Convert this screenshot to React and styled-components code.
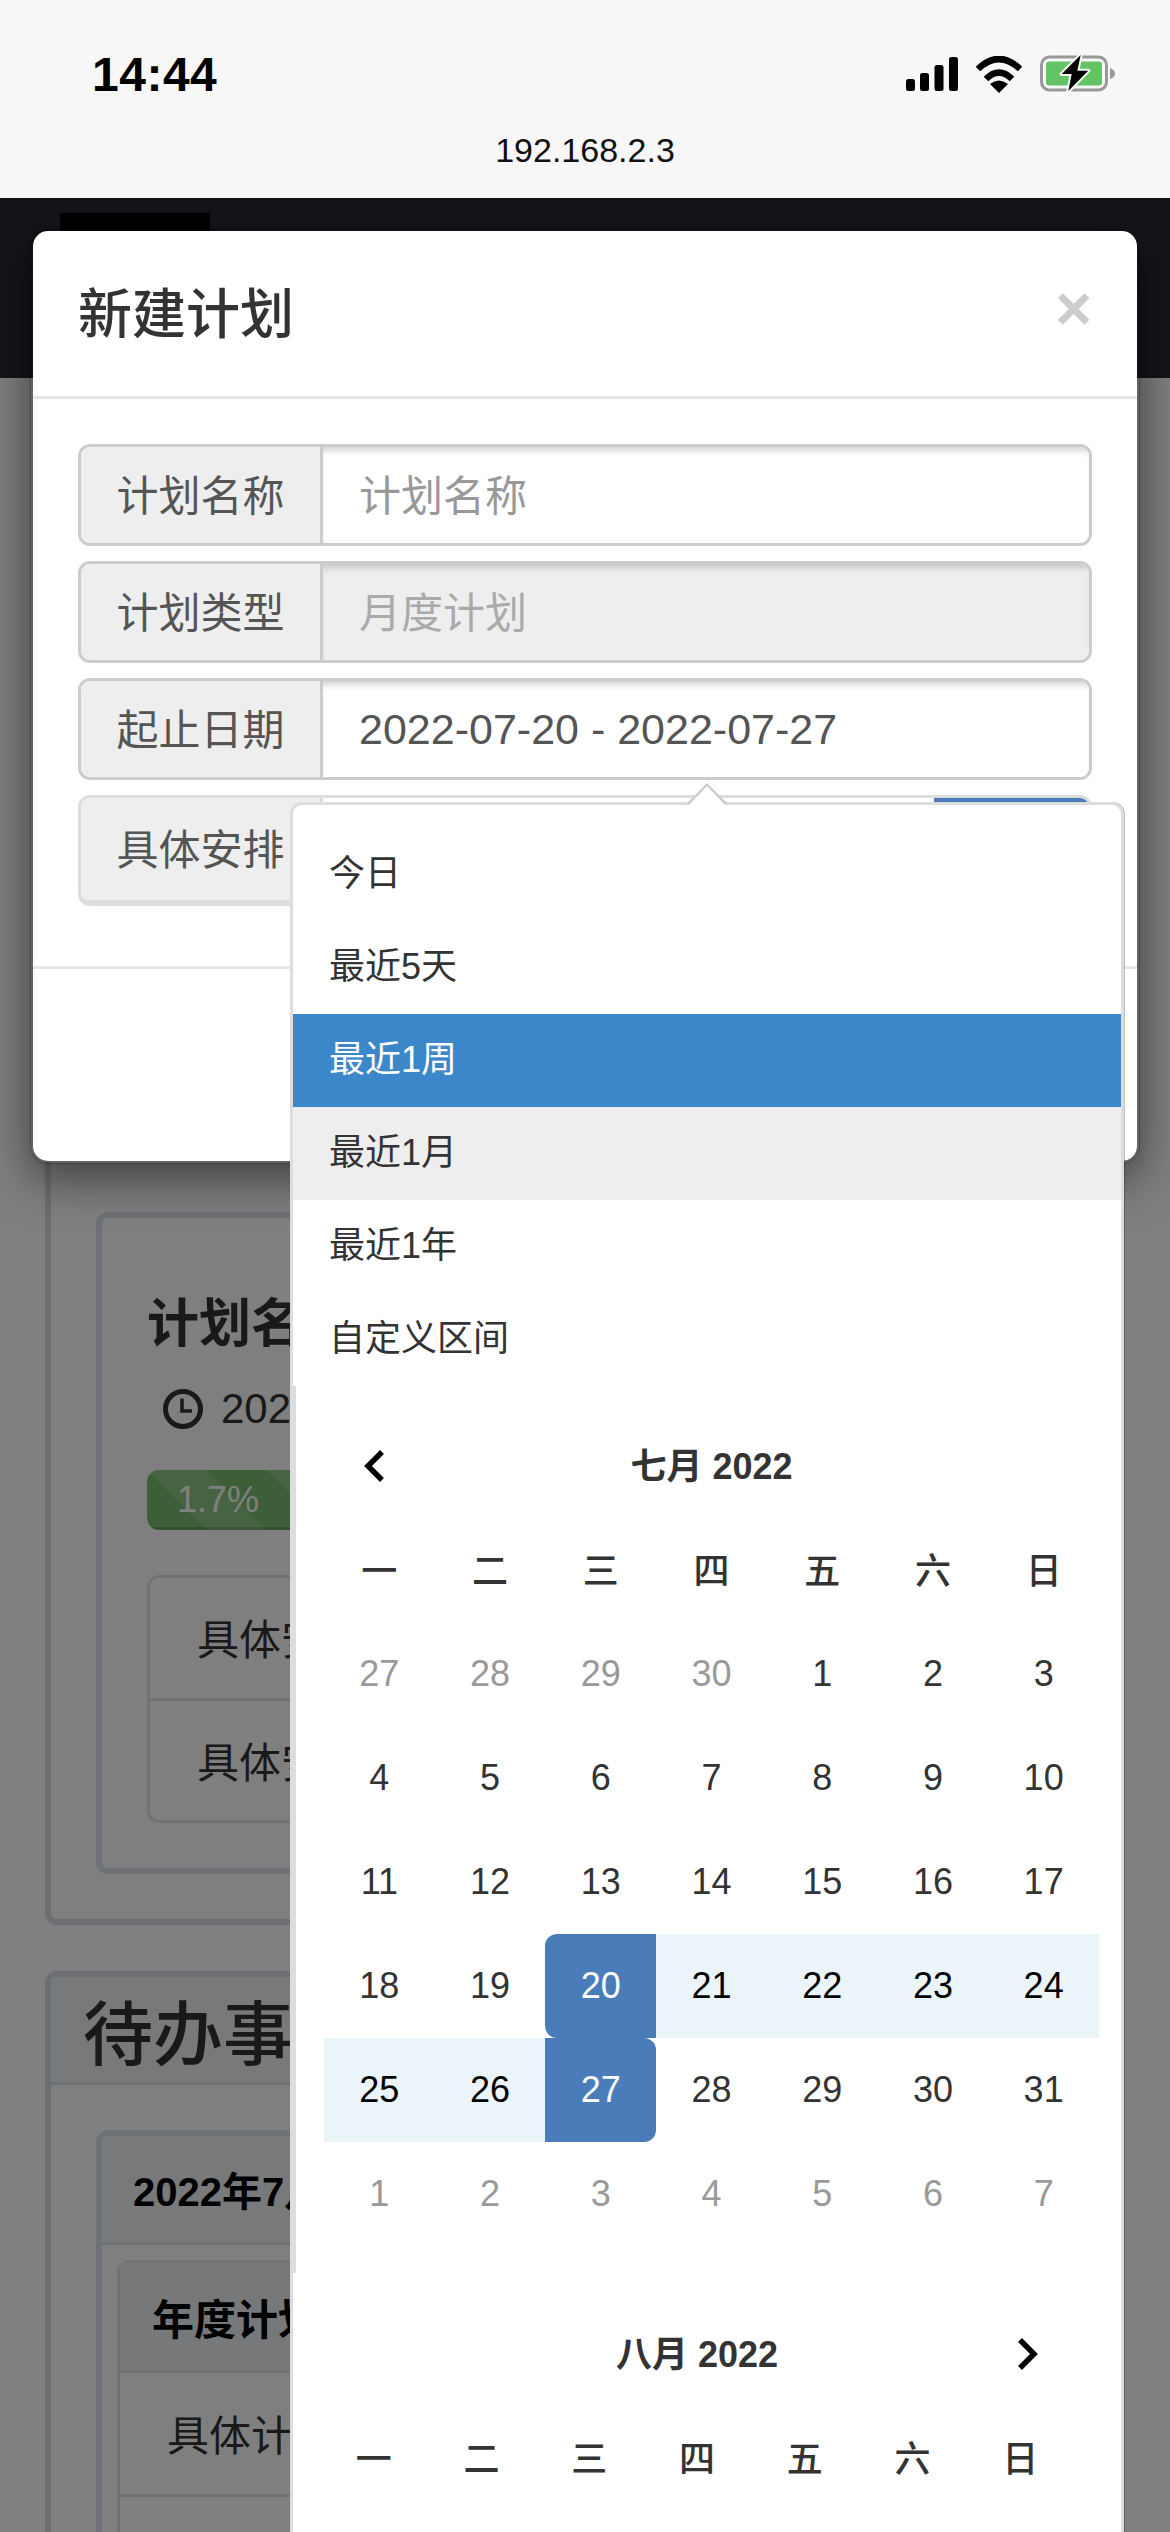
import React from "react";
import styled, { createGlobalStyle } from "styled-components";

const GlobalStyle = createGlobalStyle`
  html, body {
    margin: 0;
    padding: 0;
    width: 1170px;
    height: 2532px;
    overflow: hidden;
    background: #fff;
  }
  * {
    box-sizing: border-box;
  }
  body {
    font-family: "Liberation Sans", "Noto Sans CJK SC", sans-serif;
    color: #333;
  }
`;

const BrowserBar = styled.div`
  height: 198px;
  background: #f7f7f7;
  color: #000;
`;

const StatusRow = styled.div`
  height: 124px;
  padding: 24px 55px 0 92px;
  display: flex;
  align-items: center;
  justify-content: space-between;
`;

const Time = styled.div`
  font-size: 48px;
  font-weight: 700;
  letter-spacing: 0.5px;
`;

const StatusIcons = styled.div`
  display: flex;
  align-items: center;
  gap: 17px;
`;

const Url = styled.div`
  height: 52px;
  font-size: 34px;
  line-height: 52px;
  text-align: center;
  color: #111;
`;

const Viewport = styled.div`
  position: relative;
  height: 2334px;
  overflow: hidden;
`;

const Navbar = styled.div`
  height: 180px;
  padding: 15px 0 0 60px;
  background: #262a34;
`;

const Redaction = styled.div`
  width: 150px;
  height: 60px;
  background: #000;
`;

const Content = styled.div`
  padding: 30px 54px 0 45px;
  display: flex;
  flex-direction: column;
  gap: 46px;
`;

const Panel = styled.section`
  border: 6px solid #d6dee6;
  border-radius: 12px;
  background: #fff;
`;

const PanelHeading = styled.h2`
  margin: 0;
  height: 108px;
  padding-left: 32px;
  display: flex;
  align-items: center;
  background: #eef2f6;
  border-bottom: 3px solid #dde2e7;
  font-size: 70px;
  font-weight: 500;
`;

const PanelBody = styled.div`
  padding: ${(p) => p.$top}px 45px 45px;
`;

const Card = styled.div`
  border: 6px solid #dce3ea;
  border-radius: 12px;
  background: #fff;
`;

const CardBody = styled.div`
  padding: 45px;
`;

const PlanName = styled.h3`
  margin: 0;
  height: 118px;
  padding-bottom: 6px;
  display: flex;
  align-items: center;
  font-size: 52px;
  font-weight: 700;
`;

const PlanDate = styled.div`
  height: 56px;
  padding-left: 16px;
  display: flex;
  align-items: center;
  gap: 18px;
  font-size: 42px;
`;

const Progress = styled.div`
  margin: 33px 0 45px;
  height: 60px;
  border-radius: 12px;
  background: #f5f5f5;
  overflow: hidden;
`;

const ProgressFill = styled.div`
  height: 60px;
  padding-left: 30px;
  background-color: #7abe6e;
  background-image: linear-gradient(
    45deg,
    rgba(255, 255, 255, 0.15) 25%,
    transparent 25%,
    transparent 50%,
    rgba(255, 255, 255, 0.15) 50%,
    rgba(255, 255, 255, 0.15) 75%,
    transparent 75%,
    transparent
  );
  background-size: 120px 120px;
  box-shadow: inset 0 -3px 0 rgba(0, 0, 0, 0.15);
  color: #fff;
  font-size: 36px;
  line-height: 60px;
`;

const List = styled.div`
  border: 3px solid #e4e4e4;
  border-radius: 12px;
`;

const ListItem = styled.div`
  height: ${(p) => p.$height || 124}px;
  padding: 0 0 3px 47px;
  display: flex;
  align-items: center;
  border-top: ${(p) => (p.$first ? "none" : "3px solid #e4e4e4")};
  font-size: 42px;
`;

const CardHeading = styled.div`
  height: 109px;
  padding-left: 31px;
  display: flex;
  align-items: center;
  background: #eef2f6;
  border-bottom: 3px solid #dde2e7;
  color: #000;
  font-size: 40px;
  font-weight: 700;
`;

const CardList = styled.div`
  padding: 15px;
`;

const SubHeading = styled.div`
  height: 107px;
  padding-left: 32px;
  display: flex;
  align-items: center;
  background: #eef0f4;
  color: #000;
  font-size: 42px;
  font-weight: 700;
`;

const Backdrop = styled.div`
  position: absolute;
  inset: 0;
  background: rgba(0, 0, 0, 0.5);
`;

const Modal = styled.div`
  position: absolute;
  top: 30px;
  left: 30px;
  width: 1110px;
  height: 936px;
  background: #fff;
  background-clip: padding-box;
  border: 3px solid rgba(0, 0, 0, 0.2);
  border-radius: 18px;
  box-shadow: 0 15px 45px rgba(0, 0, 0, 0.5);
`;

const ModalHeader = styled.div`
  height: 168px;
  padding: 0 45px;
  display: flex;
  align-items: center;
  justify-content: space-between;
  border-bottom: 3px solid #e5e5e5;
`;

const ModalTitle = styled.h4`
  margin: 0 0 6px;
  font-size: 54px;
  font-weight: 500;
  color: #333;
`;

const Close = styled.span`
  margin-bottom: 10px;
  font-size: 63px;
  font-weight: 700;
  line-height: 1;
  color: #ccc;
`;

const ModalBody = styled.div`
  padding: 45px 45px 60px;
  display: flex;
  flex-direction: column;
  gap: 15px;
  border-bottom: 3px solid #e5e5e5;
`;

const Group = styled.div`
  height: ${(p) => (p.$faded ? 111 : 102)}px;
  display: flex;
  border: solid ${(p) => (p.$faded ? "#ddd" : "#ccc")};
  border-width: ${(p) => (p.$faded ? "3px 3px 6px" : "3px")};
  border-radius: 12px;
  overflow: hidden;
`;

const Addon = styled.div`
  width: 242px;
  flex: none;
  padding-bottom: 5px;
  display: flex;
  align-items: center;
  justify-content: center;
  background: #eee;
  border-right: 3px solid ${(p) => (p.$faded ? "#ddd" : "#ccc")};
  color: #555;
  font-size: 42px;
`;

const Field = styled.div`
  flex: 1;
  padding: 0 0 ${(p) => (p.$date ? 0 : 5)}px 36px;
  display: flex;
  align-items: center;
  background: ${(p) => (p.$disabled ? "#eee" : "#fff")};
  box-shadow: inset 0 7px 6px -3px rgba(0, 0, 0, 0.17);
  color: ${(p) => p.$color || "#555"};
  font-size: ${(p) => (p.$date ? 43 : 42)}px;
`;

const PlainField = styled.div`
  flex: 1;
  display: flex;
  justify-content: flex-end;
  background: #fff;
`;

const PickButton = styled.div`
  width: 155px;
  background: #4a7cba;
`;

const Dropdown = styled.div`
  position: absolute;
  top: 604px;
  left: 290px;
  width: 834px;
  background: #fff;
  border: 3px solid #ddd;
  border-radius: 12px;
  box-shadow: 1px 0 0 rgba(0, 0, 0, 0.25);

  &::before,
  &::after {
    content: "";
    position: absolute;
    width: 0;
    height: 0;
    border-style: solid;
    border-color: transparent;
  }
  &::before {
    top: -22px;
    left: 393px;
    border-width: 0 21px 21px;
    border-bottom-color: #ccc;
  }
  &::after {
    top: -19px;
    left: 396px;
    border-width: 0 18px 19px;
    border-bottom-color: #fff;
  }
`;

const Ranges = styled.div`
  padding-top: 23px;
`;

const RangeItem = styled.div`
  height: 93px;
  padding: 0 0 9px 36px;
  display: flex;
  align-items: center;
  background: ${(p) => (p.$active ? "#3c87c9" : p.$hover ? "#eee" : "#fff")};
  color: ${(p) => (p.$active ? "#fff" : "#333")};
  font-size: 36px;
`;

const Calendar = styled.div`
  padding: ${(p) => p.$padding};
  border-left: ${(p) => (p.$bordered ? "3px solid #ddd" : "none")};
`;

const CalGrid = styled.div`
  display: grid;
  grid-template-columns: repeat(7, 1fr);
  grid-auto-rows: 104px;
  font-size: 36px;
`;

const MonthTitle = styled.div`
  grid-column: ${(p) => p.$span};
  padding-bottom: 6px;
  display: flex;
  align-items: center;
  justify-content: center;
  font-weight: 700;
`;

const NavCell = styled.div`
  display: flex;
  align-items: center;
  justify-content: center;
`;

const Chevron = styled.svg`
  width: 22px;
  height: 34px;
  margin: ${(p) => p.$margin};
`;

const WeekDay = styled.div`
  padding-bottom: 5px;
  display: flex;
  align-items: center;
  justify-content: center;
  font-weight: 500;
`;

const dayColor = (p) => {
  if (p.$edge) return "#fff";
  if (p.$inRange) return "#000";
  if (p.$off) return "#999";
  return "#333";
};

const dayBg = (p) => {
  if (p.$edge) return "#4a7cba";
  if (p.$inRange) return "#ebf4f8";
  return "transparent";
};

const Day = styled.div`
  display: flex;
  align-items: center;
  justify-content: center;
  background: ${dayBg};
  color: ${dayColor};
  border-radius: ${(p) =>
    p.$edge === "start" ? "12px 0 0 12px" : p.$edge === "end" ? "0 12px 12px 0" : "0"};
`;

const ClockIcon = () => (
  <svg width="40" height="40" viewBox="0 0 40 40" fill="none" stroke="#333">
    <circle cx="20" cy="20" r="17.5" strokeWidth="5" />
    <path d="M19 9.5V22H29" strokeWidth="3.5" />
  </svg>
);

const SignalIcon = () => (
  <svg width="52" height="34" viewBox="0 0 52 34" fill="#000">
    <rect x="0" y="22" width="9" height="12" rx="2.5" />
    <rect x="14" y="16" width="9" height="18" rx="2.5" />
    <rect x="28.500" y="8" width="9" height="26" rx="2.5" />
    <rect x="43" y="0" width="9" height="34" rx="2.5" />
  </svg>
);

const WifiIcon = () => (
  <svg width="48" height="37" viewBox="0 0 48 37">
    <path d="M3 13Q24 -7 45 13" fill="none" stroke="#000" strokeWidth="6.500" />
    <path d="M11 23Q24 10 37 23" fill="none" stroke="#000" strokeWidth="6.500" />
    <path d="M24 37L15 28Q24 21 33 28Z" fill="#000" />
  </svg>
);

const BatteryIcon = () => (
  <svg width="75" height="38" viewBox="0 0 75 38">
    <rect x="1.500" y="2" width="65" height="33" rx="8" fill="none" stroke="#999" strokeWidth="3" />
    <path d="M70 13Q75 15 75 18.500Q75 22 70 24Z" fill="#999" />
    <rect x="6" y="6.500" width="56" height="24" rx="3" fill="#63c466" />
    <polygon
      points="40.700,0 21.700,19 31.700,19 28.300,36 48.300,15.700 37.300,15.700"
      fill="#000"
      stroke="#f7f7f7"
      strokeWidth="4"
      paintOrder="stroke"
      strokeLinejoin="round"
    />
  </svg>
);

const weekDays = ["一", "二", "三", "四", "五", "六", "日"];

const julyDays = [
  ...[27, 28, 29, 30].map((d) => ({ d, off: true })),
  ...Array.from({ length: 31 }, (_, i) => ({ d: i + 1 })),
  ...[1, 2, 3, 4, 5, 6, 7].map((d) => ({ d, off: true })),
];

const rangeOf = ({ d, off }) => {
  if (off) return {};
  if (d === 20) return { $edge: "start" };
  if (d === 27) return { $edge: "end" };
  if (d > 20 && d < 27) return { $inRange: true };
  return {};
};

const ranges = ["今日", "最近5天", "最近1周", "最近1月", "最近1年", "自定义区间"];

export default function App() {
  return (
    <React.Fragment>
      <GlobalStyle />
      <BrowserBar>
        <StatusRow>
          <Time>14:44</Time>
          <StatusIcons>
            <SignalIcon />
            <WifiIcon />
            <BatteryIcon />
          </StatusIcons>
        </StatusRow>
        <Url>192.168.2.3</Url>
      </BrowserBar>

      <Viewport>
        <Navbar>
          <Redaction />
        </Navbar>

        <Content>
          <Panel>
            <PanelBody $top={798}>
              <Card>
                <CardBody>
                  <PlanName>计划名称</PlanName>
                  <PlanDate>
                    <ClockIcon />
                    2022-07-01
                  </PlanDate>
                  <Progress>
                    <ProgressFill>1.7%</ProgressFill>
                  </Progress>
                  <List>
                    <ListItem $first $height={120}>具体安排</ListItem>
                    <ListItem $height={122}>具体安排</ListItem>
                  </List>
                </CardBody>
              </Card>
            </PanelBody>
          </Panel>

          <Panel>
            <PanelHeading>待办事项</PanelHeading>
            <PanelBody $top={45}>
              <Card>
                <CardHeading>2022年7月</CardHeading>
                <CardList>
                  <List>
                    <SubHeading>年度计划</SubHeading>
                    <ListItem>具体计划</ListItem>
                    <ListItem />
                  </List>
                </CardList>
              </Card>
            </PanelBody>
          </Panel>
        </Content>

        <Backdrop />

        <Modal>
          <ModalHeader>
            <ModalTitle>新建计划</ModalTitle>
            <Close>×</Close>
          </ModalHeader>
          <ModalBody>
            <Group>
              <Addon>计划名称</Addon>
              <Field $color="#999">计划名称</Field>
            </Group>
            <Group>
              <Addon>计划类型</Addon>
              <Field $disabled $color="#aaa">月度计划</Field>
            </Group>
            <Group>
              <Addon>起止日期</Addon>
              <Field $date>2022-07-20 - 2022-07-27</Field>
            </Group>
            <Group $faded>
              <Addon $faded>具体安排</Addon>
              <PlainField>
                <PickButton />
              </PlainField>
            </Group>
          </ModalBody>
        </Modal>

        <Dropdown>
          <Ranges>
            {ranges.map((r) => (
              <RangeItem key={r} $active={r === "最近1周"} $hover={r === "最近1月"}>
                {r}
              </RangeItem>
            ))}
          </Ranges>

          <Calendar $bordered $padding="28px 22px 27px 28px">
            <CalGrid>
              <NavCell>
                <Chevron $margin="0 10px 0 0" viewBox="0 0 22 34" fill="none" stroke="#000" strokeWidth="5.500">
                  <path d="M19 3L5 17L19 31" />
                </Chevron>
              </NavCell>
              <MonthTitle $span="span 5">七月 2022</MonthTitle>
              <div />
              {weekDays.map((w) => (
                <WeekDay key={w}>{w}</WeekDay>
              ))}
              {julyDays.map((item, i) => (
                <Day key={i} $off={item.off} {...rangeOf(item)}>
                  {item.d}
                </Day>
              ))}
            </CalGrid>
          </Calendar>

          <Calendar $padding="29px 47px 130px 27px">
            <CalGrid>
              <div />
              <MonthTitle $span="span 5">八月 2022</MonthTitle>
              <NavCell>
                <Chevron $margin="0 0 0 16px" viewBox="0 0 22 34" fill="none" stroke="#000" strokeWidth="5.500">
                  <path d="M3 3L17 17L3 31" />
                </Chevron>
              </NavCell>
              {weekDays.map((w) => (
                <WeekDay key={w}>{w}</WeekDay>
              ))}
            </CalGrid>
          </Calendar>
        </Dropdown>
      </Viewport>
    </React.Fragment>
  );
}
